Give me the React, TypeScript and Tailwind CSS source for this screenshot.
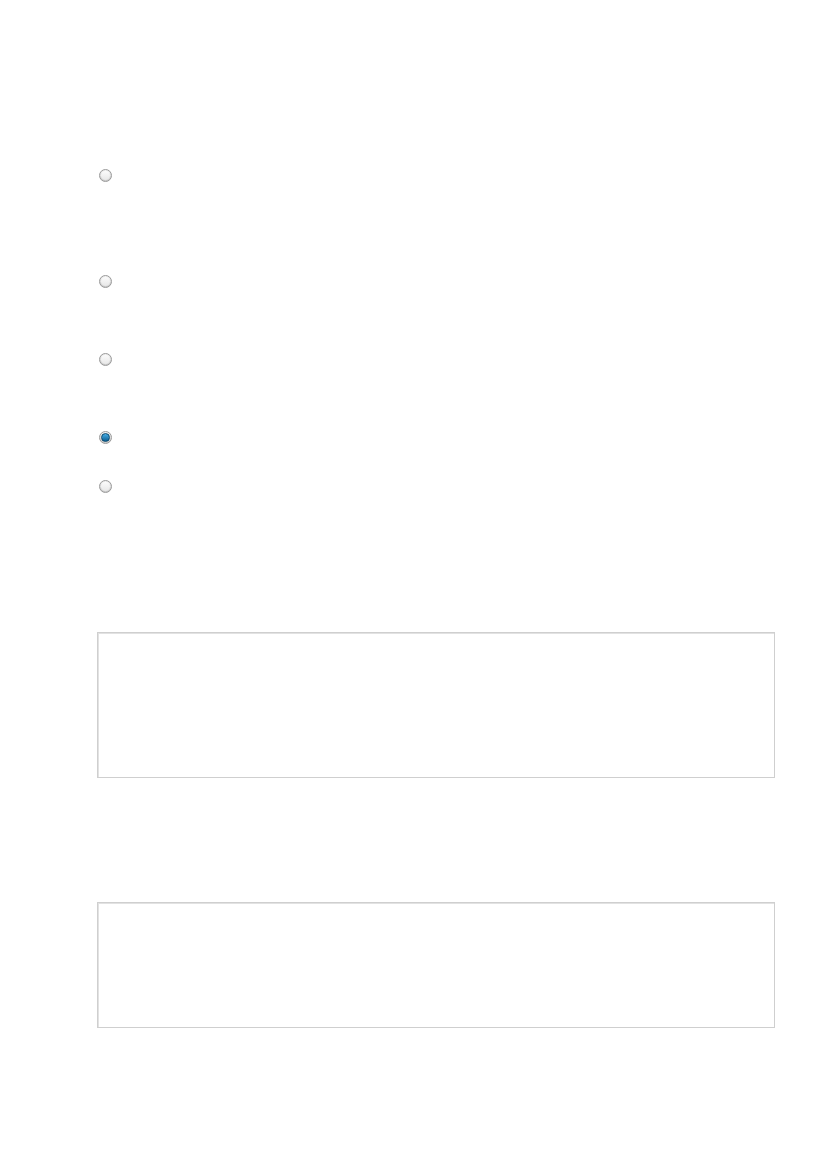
import React from 'react';

type RadioProps = { checked?: boolean };

// Old-style glossy radio: grey ring, soft inner face, blue dot when picked
const Radio = ({ checked = false }: RadioProps) => (
    <span className="flex h-[13px] w-[13px] items-center justify-center rounded-full border border-[#9a9a9a] bg-gradient-to-b from-[#f2f2f2] to-[#c9c9c9]">
        {checked ? (
            <span className="h-[9px] w-[9px] rounded-full border border-[#0a4a70] bg-gradient-to-b from-[#46aee6] to-[#0a5f92]" />
        ) : (
            <span className="h-[9px] w-[9px] rounded-full bg-gradient-to-b from-[#fbfbfb] to-[#e8e8e8]" />
        )}
    </span>
);

const TextBox = ({ height }: { height: string }) => (
    <div className={`ml-[97px] w-[678px] border border-[#cfcfcf] bg-white shadow-[inset_1px_1px_0_#e2e2e2] ${height}`} />
);

const App = () => {
    return (
        <div className="min-h-[1169px] w-[827px] bg-white font-['Liberation_Sans',sans-serif]">
            <div className="flex flex-col pl-[99px] pt-[169px]">
                <Radio />
                <div className="h-[93px]" />
                <Radio />
                <div className="h-[65px]" />
                <Radio />
                <div className="h-[65px]" />
                <Radio checked />
                <div className="h-[36px]" />
                <Radio />
            </div>
            <div className="h-[139px]" />
            <TextBox height="h-[146px]" />
            <div className="h-[124px]" />
            <TextBox height="h-[126px]" />
        </div>
    );
};

export default App;
